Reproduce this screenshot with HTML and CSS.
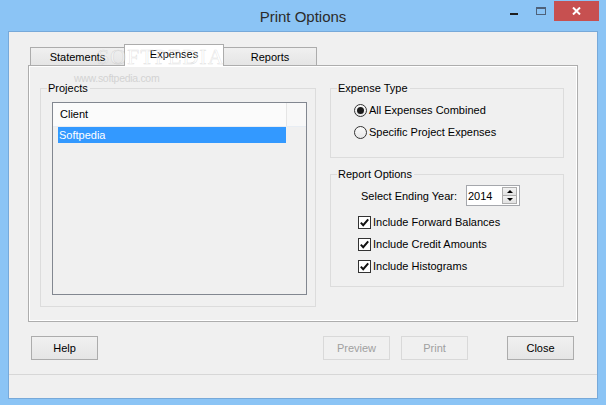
FILE: index.html
```html
<!DOCTYPE html>
<html>
<head>
<meta charset="utf-8">
<title>Print Options</title>
<link rel="stylesheet" href="styles.css">
</head>
<body>
<div class="window">
  <div class="titlebar">
    <div class="title">Print Options</div>
    <div class="controls">
      <div class="ctl ctl-min"><span class="min-bar"></span></div>
      <div class="ctl ctl-max"><span class="max-box"></span></div>
      <div class="ctl ctl-close">
        <svg width="9" height="8" viewBox="0 0 9 8"><path d="M1 0.5 L8 7.5 M8 0.5 L1 7.5" stroke="#fff" stroke-width="2" fill="none"/></svg>
      </div>
    </div>
  </div>

  <div class="client">
    <div class="tabstrip">
      <div class="tab tab-statements">Statements</div>
      <div class="tab tab-active">Expenses</div>
      <div class="tab tab-reports">Reports</div>
    </div>

    <div class="pane">
      <div class="group group-projects">
        <div class="group-label">Projects</div>
        <div class="listbox">
          <div class="lv-header">
            <div class="lv-col">Client</div>
            <div class="lv-rest"></div>
          </div>
          <div class="lv-row lv-selected">Softpedia</div>
        </div>
      </div>

      <div class="right-col">
        <div class="group group-expense">
          <div class="group-label">Expense Type</div>
          <div class="option">
            <span class="radio radio-checked"><span class="dot"></span></span>
            <span class="option-text">All Expenses Combined</span>
          </div>
          <div class="option">
            <span class="radio"></span>
            <span class="option-text">Specific Project Expenses</span>
          </div>
        </div>

        <div class="group group-report">
          <div class="group-label">Report Options</div>
          <div class="year-row">
            <span class="year-label">Select Ending Year:</span>
            <div class="spinner">
              <span class="spin-value">2014</span>
              <div class="spin-buttons">
                <span class="spin-btn"><span class="arrow-up"></span></span>
                <span class="spin-btn"><span class="arrow-down"></span></span>
              </div>
            </div>
          </div>
          <div class="checks">
            <div class="check-row">
              <span class="checkbox"><svg width="11" height="11" viewBox="0 0 11 11"><path d="M1.8 5.6 L4.2 8.2 L9.2 2.4" stroke="#111" stroke-width="2" fill="none"/></svg></span>
              <span class="option-text">Include Forward Balances</span>
            </div>
            <div class="check-row">
              <span class="checkbox"><svg width="11" height="11" viewBox="0 0 11 11"><path d="M1.8 5.6 L4.2 8.2 L9.2 2.4" stroke="#111" stroke-width="2" fill="none"/></svg></span>
              <span class="option-text">Include Credit Amounts</span>
            </div>
            <div class="check-row">
              <span class="checkbox"><svg width="11" height="11" viewBox="0 0 11 11"><path d="M1.8 5.6 L4.2 8.2 L9.2 2.4" stroke="#111" stroke-width="2" fill="none"/></svg></span>
              <span class="option-text">Include Histograms</span>
            </div>
          </div>
        </div>
      </div>
    </div>

    <div class="buttons">
      <div class="btn">Help</div>
      <div class="btn btn-disabled btn-preview">Preview</div>
      <div class="btn btn-disabled btn-print">Print</div>
      <div class="btn btn-close">Close</div>
    </div>
    <div class="separator"></div>
    <div class="status"></div>
  </div>

  <div class="wm-big">SOFTPEDIA</div>
  <div class="wm-small">www.softpedia.com</div>
</div>
</body>
</html>
```

FILE: styles.css
```css
* { box-sizing: border-box; }

html, body {
  margin: 0;
  padding: 0;
}

body {
  font-family: "Liberation Sans", Arial, sans-serif;
  font-size: 11px;
  color: #000;
  background: #8bc4f5;
}

.window {
  position: relative;
  width: 606px;
  height: 405px;
  background: #8bc4f5;
  overflow: hidden;
}

/* ---------- title bar ---------- */
.titlebar {
  position: relative;
  height: 31px;
}

.title {
  text-align: center;
  font-size: 15px;
  line-height: 31px;
  color: #2b2b2b;
  padding-top: 1px;
}

.controls {
  position: absolute;
  top: 0;
  right: 7px;
  display: flex;
}

.ctl {
  width: 27px;
  height: 21px;
  display: flex;
  justify-content: center;
}

.min-bar {
  display: block;
  width: 8px;
  height: 2px;
  margin-top: 13px;
  background: #1e1e1e;
}

.max-box {
  display: block;
  width: 10px;
  height: 8px;
  margin-top: 7px;
  border: 1px solid #4e6179;
  border-top-width: 2px;
}

.ctl-close {
  width: 45px;
  height: 20px;
  margin-top: 1px;
  background: #c75050;
  align-items: center;
}

/* ---------- client ---------- */
.client {
  margin: 0 8px 0 8px;
  height: 368px;
  background: #f0f0f0;
  border: 1px solid #77a9d9;
  display: flex;
  flex-direction: column;
}

.tabstrip {
  display: flex;
  align-items: flex-end;
  height: 33px;
  padding-left: 21px;
  position: relative;
  z-index: 2;
}

.tab {
  height: 18px;
  border: 1px solid #acacac;
  border-bottom: none;
  background: linear-gradient(#f0f0f0, #e5e5e5);
  text-align: center;
  line-height: 13px;
  padding-top: 3px;
  color: #000;
}

.tab-statements { width: 95px; }

.tab-active {
  width: 100px;
  height: 22px;
  margin-left: -1px;
  margin-bottom: -1px;
  background: #fff;
  position: relative;
}

.tab-reports {
  width: 94px;
  margin-left: -1px;
}

.pane {
  margin-left: 19px;
  width: 550px;
  height: 257px;
  border: 1px solid #adadad;
  box-shadow: inset 0 0 0 1px #fff;
  padding: 22px 0 0 11px;
  display: flex;
  align-items: flex-start;
  gap: 14px;
}

/* ---------- group boxes ---------- */
.group {
  position: relative;
  border: 1px solid #dcdcdc;
}

.group-label {
  position: absolute;
  top: -7px;
  left: 6px;
  padding: 0 2px 0 1px;
  line-height: 13px;
  background: #f0f0f0;
}

.group-projects {
  width: 276px;
  height: 219px;
  padding: 13px 0 0 11px;
}

.listbox {
  width: 255px;
  height: 193px;
  border: 1px solid #828790;
  background: #f0f0f0;
}

.lv-header {
  display: flex;
  height: 24px;
  border-bottom: 1px solid #e8edf3;
  background: #fafafa;
}

.lv-col {
  width: 233px;
  margin-left: 1px;
  padding-left: 6px;
  line-height: 23px;
  border-right: 1px solid #e5e5e5;
  background: #fbfbfb;
}

.lv-rest {
  flex: 1;
  background: #f8f8f8;
}

.lv-row {
  margin-left: 5px;
  width: 228px;
  height: 16px;
  line-height: 16px;
  padding-left: 1px;
}

.lv-selected {
  background: #3399ff;
  color: #fff;
}

.right-col {
  width: 234px;
  display: flex;
  flex-direction: column;
  gap: 16px;
}

.group-expense {
  height: 70px;
  padding: 14px 0 0 23px;
  display: flex;
  flex-direction: column;
  gap: 8px;
}

.option, .check-row {
  display: flex;
  align-items: center;
  height: 14px;
}

.option-text {
  line-height: 14px;
  white-space: nowrap;
}

.radio {
  width: 13px;
  height: 13px;
  border: 1px solid #333;
  border-radius: 50%;
  background: linear-gradient(#fafafa, #e8e8e8);
  display: flex;
  align-items: center;
  justify-content: center;
  margin-right: 2px;
  flex: none;
}

.radio .dot {
  width: 7px;
  height: 7px;
  border-radius: 50%;
  background: #1b1b1b;
}

.group-report {
  height: 113px;
  padding: 10px 0 0 0;
}

.year-row {
  display: flex;
  align-items: center;
  padding-left: 30px;
}

.year-label {
  width: 105px;
  line-height: 14px;
  white-space: nowrap;
}

.spinner {
  width: 54px;
  height: 21px;
  border: 1px solid #a5a7ac;
  background: #fff;
  display: flex;
  align-items: center;
  padding-left: 1px;
}

.spin-value {
  flex: 1;
  line-height: 14px;
}

.spin-buttons {
  display: flex;
  flex-direction: column;
  width: 15px;
  height: 17px;
  margin-right: 2px;
}

.spin-btn {
  flex: 1;
  border: 1px solid #adadad;
  background: linear-gradient(#f2f2f2, #e2e2e2);
  display: flex;
  align-items: center;
  justify-content: center;
}

.spin-btn + .spin-btn { border-top: none; }

.arrow-up {
  width: 0;
  height: 0;
  border-left: 3px solid transparent;
  border-right: 3px solid transparent;
  border-bottom: 3px solid #000;
}

.arrow-down {
  width: 0;
  height: 0;
  border-left: 3px solid transparent;
  border-right: 3px solid transparent;
  border-top: 3px solid #000;
}

.checks {
  display: flex;
  flex-direction: column;
  gap: 8px;
  padding-left: 27px;
  margin-top: 9px;
}

.checkbox {
  width: 13px;
  height: 13px;
  border: 1px solid #333;
  background: #fff;
  display: flex;
  align-items: center;
  justify-content: center;
  margin-right: 2px;
  flex: none;
}

.checkbox svg { display: block; }

/* ---------- buttons ---------- */
.buttons {
  display: flex;
  margin-top: 14px;
  padding: 0 23px 0 22px;
  height: 24px;
}

.btn {
  width: 67px;
  height: 24px;
  border: 1px solid #acacac;
  background: linear-gradient(#f0f0f0, #e5e5e5);
  text-align: center;
  line-height: 22px;
  color: #000;
}

.btn-disabled {
  border-color: #d9d9d9;
  background: #f0f0f0;
  color: #a0a0a0;
}

.btn-preview { margin-left: auto; }
.btn-print { margin-left: 11px; }
.btn-close { margin-left: 39px; }

.separator {
  margin-top: 14px;
  height: 1px;
  background: #d7d7d7;
}

.status {
  flex: 1;
  background: #f0f0f0;
}

/* ---------- watermark ---------- */
.wm-big {
  position: absolute;
  left: 97px;
  top: 44px;
  font-family: "Liberation Serif", serif;
  font-size: 22px;
  letter-spacing: 1px;
  color: rgba(255, 255, 255, 0.35);
  -webkit-text-stroke: 0.5px rgba(160, 160, 160, 0.35);
  pointer-events: none;
  z-index: 5;
}

.wm-small {
  position: absolute;
  left: 74px;
  top: 72px;
  font-size: 10.5px;
  letter-spacing: -0.3px;
  color: #d3d3d3;
  pointer-events: none;
  z-index: 5;
}
```
